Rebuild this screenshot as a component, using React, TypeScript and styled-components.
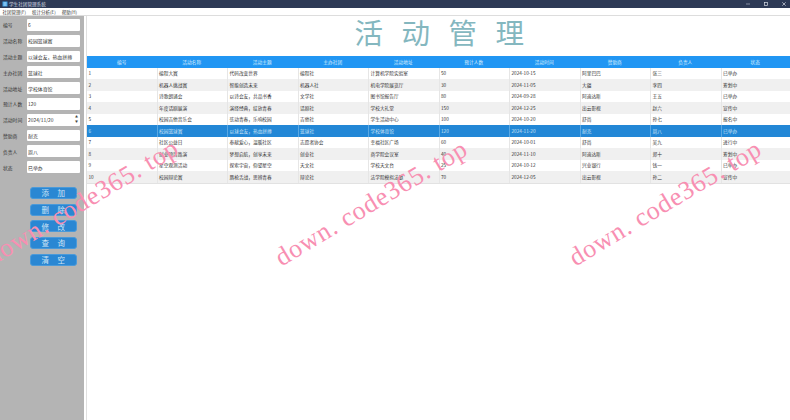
import { FC } from 'react';
import styled, { createGlobalStyle } from 'styled-components';

const GlobalStyle = createGlobalStyle`
    html, body {
        margin: 0;
        padding: 0;
        background: #fff;
    }
    * {
        box-sizing: border-box;
    }
`;

const FONT = `"Noto Sans CJK SC", "Noto Sans", sans-serif`;

const Window = styled.div`
    position: relative;
    width: 790px;
    height: 420px;
    overflow: hidden;
    display: flex;
    flex-direction: column;
    background: #fff;
    font-family: ${FONT};
    font-size: 4.7px;
    color: #333;
`;

const TitleBar = styled.div`
    height: 8px;
    flex: none;
    display: flex;
    align-items: center;
    padding: 0 4px 0 2px;
    background: #2d3a56;
    color: #d5dae4;
    font-size: 4.6px;
`;

const AppIcon = styled.svg`
    width: 6px;
    height: 6px;
    margin-right: 1px;
`;

const WindowTitle = styled.span`
    flex: 1;
`;

const WindowButton = styled.svg`
    width: 4px;
    height: 4px;
    margin-left: 14px;
`;

const MenuBar = styled.div`
    height: 8px;
    flex: none;
    display: flex;
    align-items: center;
    gap: 6px;
    padding-left: 2.5px;
    background: #fff;
    font-size: 4.5px;
    color: #333;
    border-bottom: 1px solid #ddd;
`;

const Body = styled.div`
    flex: 1;
    display: flex;
    min-height: 0;
`;

const Sidebar = styled.aside`
    width: 84px;
    flex: none;
    padding: 3px 4px 0 3px;
    background: #b4b4b4;
`;

const Form = styled.div`
    display: flex;
    flex-direction: column;
    gap: 4px;
`;

const Field = styled.label`
    height: 11.8px;
    display: flex;
    align-items: center;
    font-size: 4.8px;
    color: #333;
`;

const FieldLabel = styled.span`
    width: 24px;
    flex: none;
    white-space: nowrap;
`;

const SpinWrap = styled.div`
    position: relative;
    flex: 1;
    height: 100%;
    display: flex;
`;

const FieldInput = styled.input`
    width: 53px;
    height: 100%;
    padding: 0 1px;
    border: none;
    outline: none;
    border-radius: 1px;
    background: #fff;
    font-family: ${FONT};
    font-size: 4.9px;
    color: #333;
`;

const Spinner = styled.div`
    position: absolute;
    right: 1px;
    top: 1px;
    bottom: 1px;
    width: 5px;
    display: flex;
    flex-direction: column;
    justify-content: space-around;
    align-items: center;
    color: #444;
    font-size: 3px;
    line-height: 1;
`;

const Buttons = styled.div`
    display: flex;
    flex-direction: column;
    gap: 4.7px;
    margin: 14px 0 0 27px;
`;

const ActionButton = styled.button`
    width: 47px;
    height: 12px;
    padding: 0 0 0 8px;
    border: 1px solid #4b9ad9;
    border-radius: 3px;
    background: #2a87d3;
    color: #cfe5f6;
    font-family: "Noto Sans CJK SC", serif;
    font-size: 7.5px;
    letter-spacing: 8.5px;
    line-height: 1;
`;

const Main = styled.main`
    flex: 1;
    min-width: 0;
    display: flex;
    flex-direction: column;
    margin-left: 2px;
    border-left: 1px solid #e0e0e0;
`;

const Heading = styled.h1`
    height: 40px;
    flex: none;
    margin: 0;
    padding: 0 0 10px 20px;
    display: flex;
    align-items: center;
    justify-content: center;
    font-family: "Noto Sans CJK SC", serif;
    font-size: 28.5px;
    font-weight: 400;
    letter-spacing: 18.5px;
    color: #84b7bf;
`;

const Row = styled.div<{ $selected?: boolean; $stripe?: boolean }>`
    height: 11.5px;
    display: grid;
    grid-template-columns: 69.5px repeat(8, 70.5px) 1fr;
    align-items: center;
    background: ${p => (p.$selected ? '#2287d6' : p.$stripe ? '#f0f0f0' : '#fff')};
    color: ${p => (p.$selected ? '#cfe5f6' : '#333')};
`;

const HeaderRow = styled(Row)`
    background: #2196f3;
    color: #d9eefd;
    text-align: center;
`;

const Cell = styled.div<{ $selected?: boolean }>`
    height: 100%;
    display: flex;
    align-items: center;
    padding-left: 1.5px;
    white-space: nowrap;
    border-left: 1px solid ${p => (p.$selected ? '#5aa8e3' : '#e6e6e6')};
    &:first-child {
        border-left: none;
    }
`;

const HeaderCell = styled.div`
    white-space: nowrap;
`;

const TableEnd = styled.div`
    height: 1px;
    background: #e2e2e2;
`;

const Watermark = styled.div<{ $x: number; $y: number }>`
    position: absolute;
    left: ${p => p.$x}px;
    top: ${p => p.$y}px;
    transform: rotate(-31deg);
    transform-origin: left bottom;
    font-family: "Liberation Serif", serif;
    font-size: 26px;
    line-height: 1;
    letter-spacing: 0.8px;
    color: #f88fb2;
    white-space: nowrap;
    pointer-events: none;
`;

const columns = ['编号', '活动名称', '活动主题', '主办社团', '活动地址', '预计人数', '活动时间', '赞助商', '负责人', '状态'];

const rows = [
    ['1', '编程大赛', '代码改变世界', '编程社', '计算机学院实验室', '50', '2024-10-15', '阿里巴巴', '张三', '已举办'],
    ['2', '机器人挑战赛', '智能创造未来', '机器人社', '机电学院展览厅', '30', '2024-11-05', '大疆', '李四', '筹划中'],
    ['3', '诗歌朗诵会', '以诗会友，共品书香', '文学社', '图书馆报告厅', '80', '2024-09-28', '阿迪达斯', '王五', '已举办'],
    ['4', '年度话剧展演', '演绎经典，绽放青春', '话剧社', '学校大礼堂', '150', '2024-12-25', '出云影视', '赵六', '宣传中'],
    ['5', '校园吉他音乐会', '弦动青春，乐响校园', '吉他社', '学生活动中心', '100', '2024-10-20', '舒尚', '孙七', '报名中'],
    ['6', '校园篮球赛', '以球会友，热血拼搏', '篮球社', '学校体育馆', '120', '2024-11-20', '耐克', '周八', '已举办'],
    ['7', '社区公益日', '奉献爱心，温暖社区', '志愿者协会', '幸福社区广场', '60', '2024-10-01', '舒尚', '吴九', '进行中'],
    ['8', '创业项目路演', '梦想启航，创享未来', '创业社', '商学院会议室', '40', '2024-11-10', '阿迪达斯', '郑十', '筹划中'],
    ['9', '星空观测活动', '探索宇宙，仰望星空', '天文社', '学校天文台', '25', '2024-10-12', '兴业银行', '钱一', '已举办'],
    ['10', '校园辩论赛', '唇枪舌战，思辨青春', '辩论社', '法学院模拟法庭', '70', '2024-12-05', '出云影视', '孙二', '宣传中'],
];

const fields = [
    ['编号', '6'],
    ['活动名称', '校园篮球赛'],
    ['活动主题', '以球会友，热血拼搏'],
    ['主办社团', '篮球社'],
    ['活动地址', '学校体育馆'],
    ['预计人数', '120'],
    ['活动时间', '2024/11/20'],
    ['赞助商', '耐克'],
    ['负责人', '周八'],
    ['状态', '已举办'],
];

const actions = ['添加', '删除', '修改', '查询', '清空'];

const App: FC = () => (
    <Window>
        <GlobalStyle />
        <TitleBar>
            <AppIcon viewBox="0 0 6 6">
                <rect x="0.5" y="0.5" width="5" height="5" fill="#3aa0e8" />
                <path d="M1.5 2h3M1.5 4h3" stroke="#fff" strokeWidth="0.7" />
            </AppIcon>
            <WindowTitle>学生社团管理系统</WindowTitle>
            <WindowButton viewBox="0 0 4 4">
                <path d="M0 2h4" stroke="#aab2c2" strokeWidth="0.7" />
            </WindowButton>
            <WindowButton viewBox="0 0 4 4">
                <rect x="0.4" y="0.4" width="3.2" height="3.2" fill="none" stroke="#d5dae4" strokeWidth="0.7" />
            </WindowButton>
            <WindowButton viewBox="0 0 4 4">
                <path d="M0.3 0.3l3.4 3.4M3.7 0.3L0.3 3.7" stroke="#d5dae4" strokeWidth="0.7" />
            </WindowButton>
        </TitleBar>
        <MenuBar>
            <span>社团管理(F)</span>
            <span>统计分析(E)</span>
            <span>帮助(H)</span>
        </MenuBar>
        <Body>
            <Sidebar>
                <Form>
                    {fields.map(([label, value]) => (
                        <Field key={label}>
                            <FieldLabel>{label}</FieldLabel>
                            <SpinWrap>
                                <FieldInput readOnly value={value} />
                                {label === '活动时间' && (
                                    <Spinner>
                                        <span>▲</span>
                                        <span>▼</span>
                                    </Spinner>
                                )}
                            </SpinWrap>
                        </Field>
                    ))}
                </Form>
                <Buttons>
                    {actions.map(action => (
                        <ActionButton key={action}>{action}</ActionButton>
                    ))}
                </Buttons>
            </Sidebar>
            <Main>
                <Heading>活动管理</Heading>
                <HeaderRow>
                    {columns.map(column => (
                        <HeaderCell key={column}>{column}</HeaderCell>
                    ))}
                </HeaderRow>
                {rows.map((row, index) => (
                    <Row key={row[0]} $selected={index === 5} $stripe={index % 2 === 1}>
                        {row.map((value, col) => (
                            <Cell key={col} $selected={index === 5}>{value}</Cell>
                        ))}
                    </Row>
                ))}
                <TableEnd />
            </Main>
        </Body>
        <Watermark $x={-5} $y={244}>down. code365. top</Watermark>
        <Watermark $x={284} $y={245}>down. code365. top</Watermark>
        <Watermark $x={578} $y={245}>down. code365. top</Watermark>
    </Window>
);

export default App;
